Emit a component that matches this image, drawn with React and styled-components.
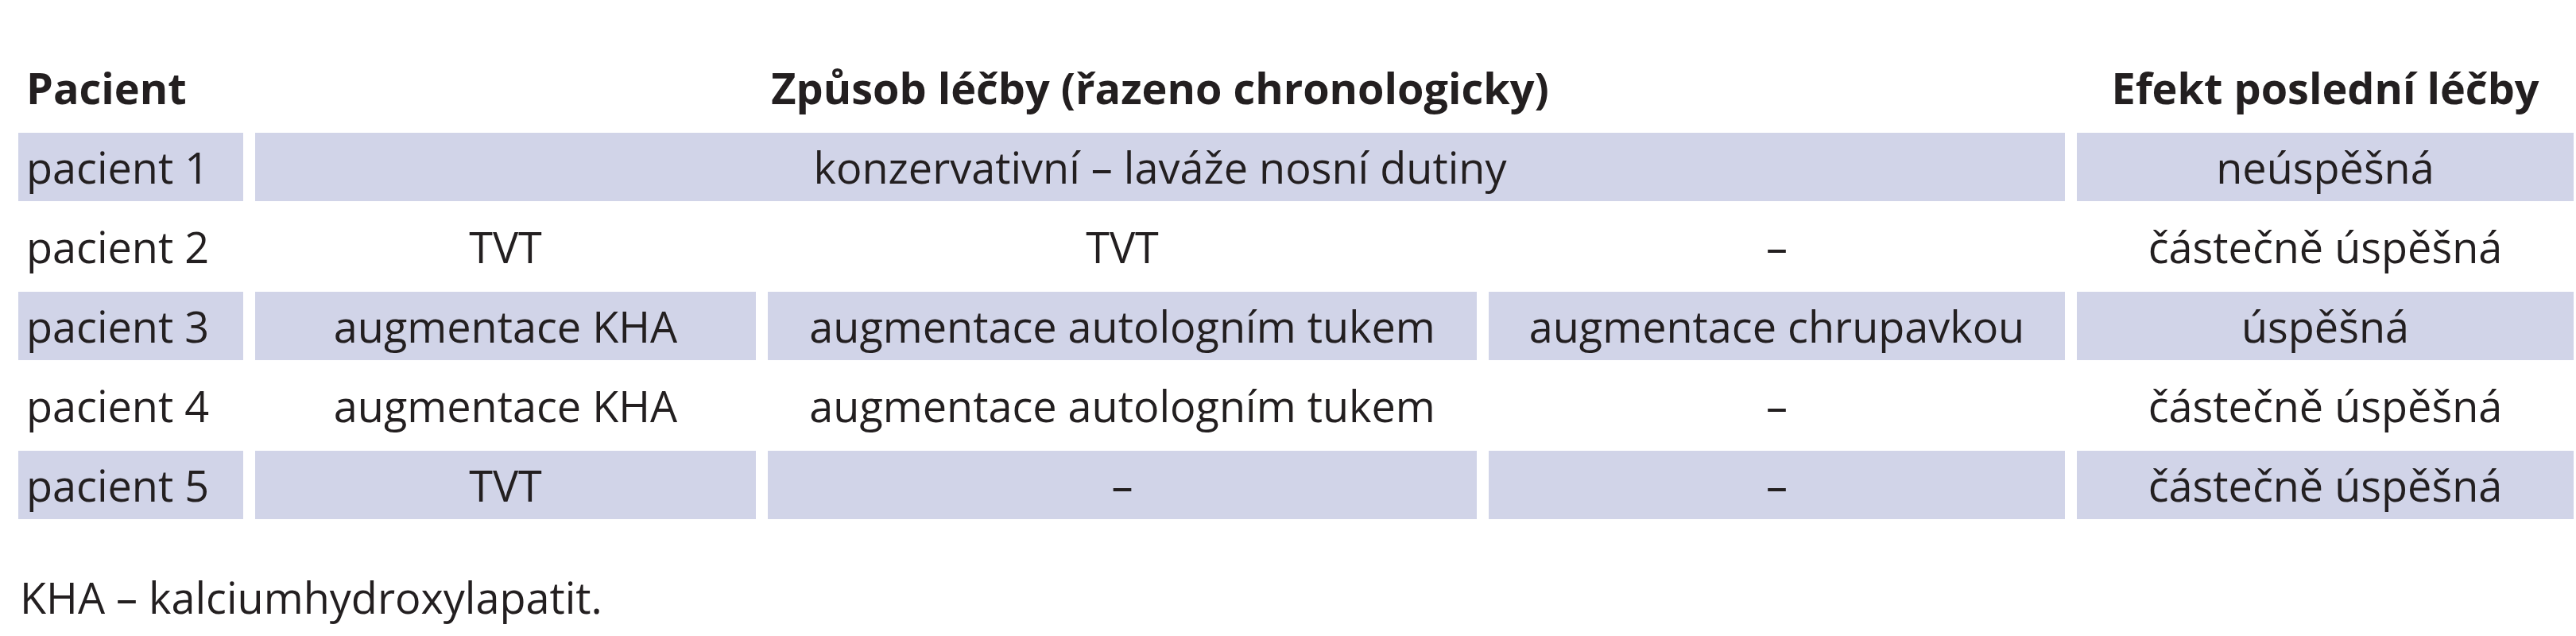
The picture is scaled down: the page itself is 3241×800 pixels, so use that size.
import React from "react";
import styled, { createGlobalStyle } from "styled-components";

const GlobalStyle = createGlobalStyle`
  html, body {
    margin: 0;
    padding: 0;
    background: #ffffff;
  }
  body {
    font-family: "Open Sans", "Noto Sans", "Liberation Sans", sans-serif;
    color: #231f20;
  }
`;

const Page = styled.div`
  width: 3241px;
  height: 800px;
  padding: 67px 0 0 23px;
  box-sizing: border-box;
  overflow: hidden;
`;

const Table = styled.div`
  display: grid;
  grid-template-columns: 283px 630px 892px 725px 625px;
  grid-auto-rows: 86px;
  column-gap: 15px;
  row-gap: 14px;
`;

const Cell = styled.div`
  display: flex;
  align-items: center;
  justify-content: ${(p) => (p.$left ? "flex-start" : "center")};
  grid-column: ${(p) => (p.$span ? `span ${p.$span}` : "auto")};
  padding: ${(p) => (p.$left ? "0 0 0 10px" : "0")};
  background: ${(p) => (p.$shaded ? "#d1d4e8" : "transparent")};
  font-size: 54px;
  font-weight: ${(p) => (p.$head ? 700 : 400)};
  line-height: normal;
  white-space: nowrap;
  box-sizing: border-box;
`;

const Footnote = styled.p`
  margin: 61px 0 0 2px;
  font-size: 54px;
  line-height: normal;
  white-space: nowrap;
`;

const rows = [
  ["pacient 1", ["konzervativní – laváže nosní dutiny", 3], "neúspěšná"],
  ["pacient 2", "TVT", "TVT", "–", "částečně úspěšná"],
  [
    "pacient 3",
    "augmentace KHA",
    "augmentace autologním tukem",
    "augmentace chrupavkou",
    "úspěšná",
  ],
  [
    "pacient 4",
    "augmentace KHA",
    "augmentace autologním tukem",
    "–",
    "částečně úspěšná",
  ],
  ["pacient 5", "TVT", "–", "–", "částečně úspěšná"],
];

export default function App() {
  return (
    <>
      <GlobalStyle />
      <Page>
        <Table>
          <Cell $head $left>
            Pacient
          </Cell>
          <Cell $head $span={3}>
            Způsob léčby (řazeno chronologicky)
          </Cell>
          <Cell $head>Efekt poslední léčby</Cell>

          {rows.map((row, r) => {
            const shaded = r % 2 === 0;
            return row.map((item, i) => {
              const text = Array.isArray(item) ? item[0] : item;
              const span = Array.isArray(item) ? item[1] : undefined;
              return (
                <Cell
                  key={`${r}-${i}`}
                  $shaded={shaded}
                  $left={i === 0}
                  $span={span}
                >
                  {text}
                </Cell>
              );
            });
          })}
        </Table>
        <Footnote>KHA – kalciumhydroxylapatit.</Footnote>
      </Page>
    </>
  );
}
